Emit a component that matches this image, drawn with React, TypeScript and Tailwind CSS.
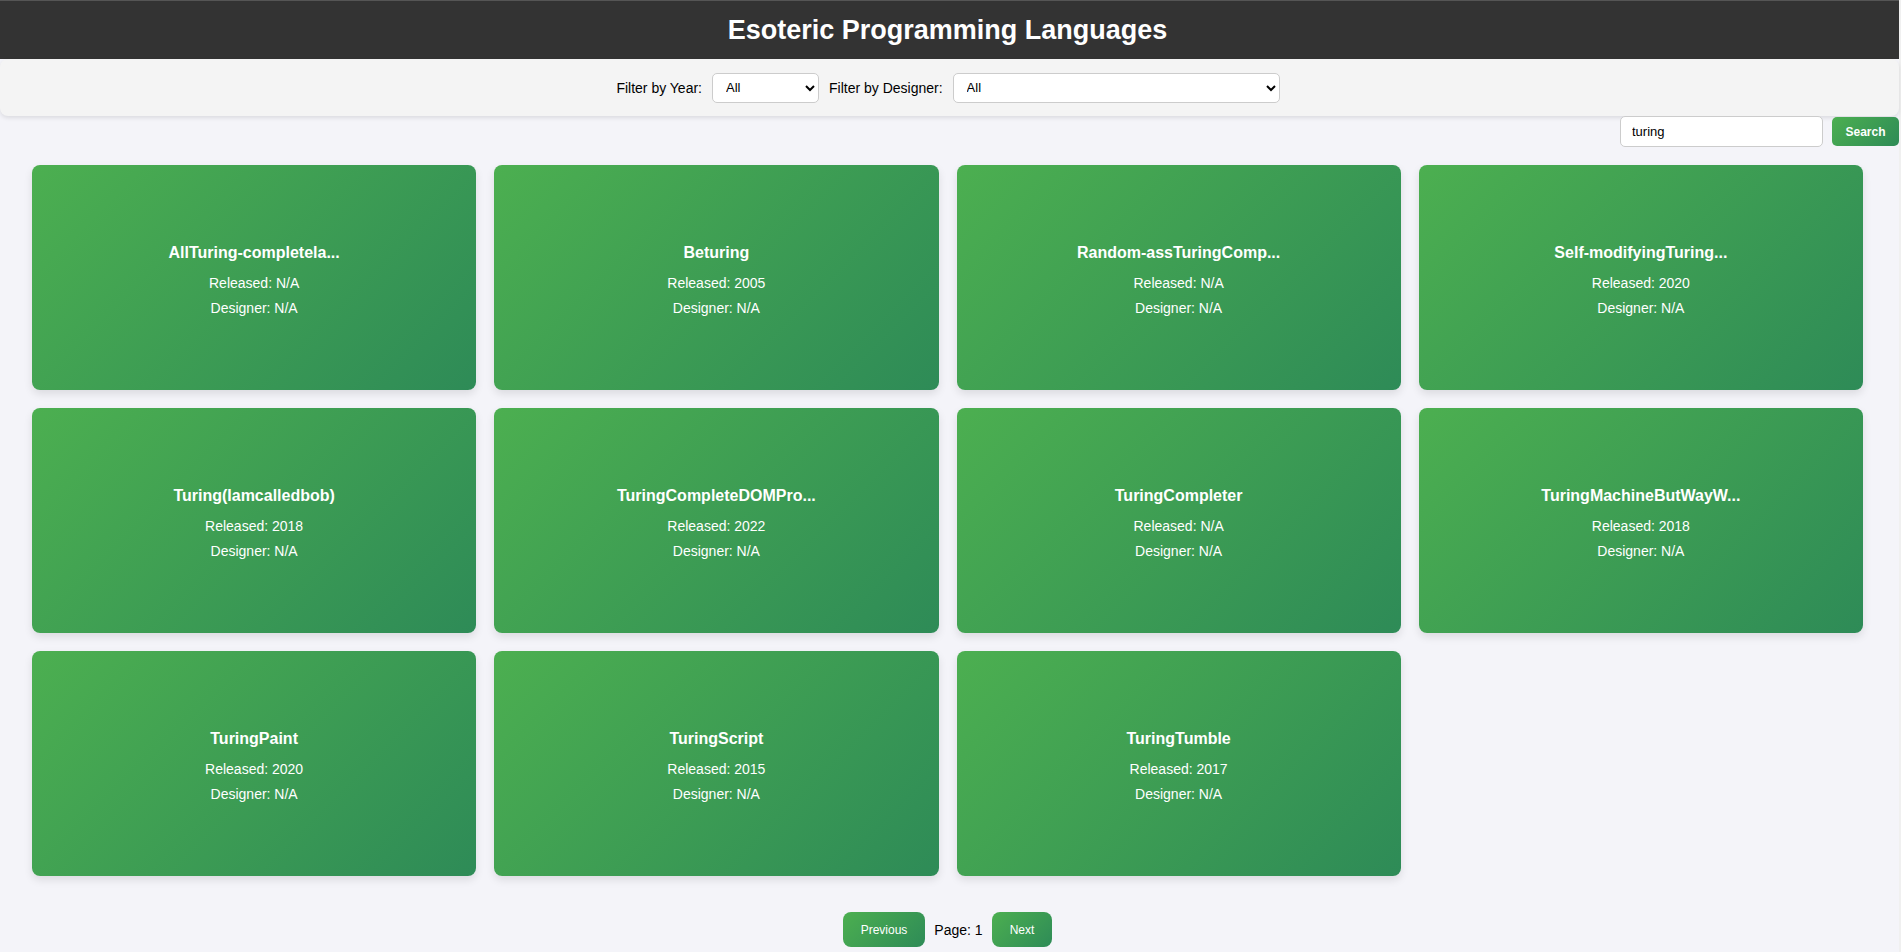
import { useState } from "react";

type Language = { name: string; released: string; designer: string };

const languages: Language[] = [
  { name: "AllTuring-completela...", released: "N/A", designer: "N/A" },
  { name: "Beturing", released: "2005", designer: "N/A" },
  { name: "Random-assTuringComp...", released: "N/A", designer: "N/A" },
  { name: "Self-modifyingTuring...", released: "2020", designer: "N/A" },
  { name: "Turing(Iamcalledbob)", released: "2018", designer: "N/A" },
  { name: "TuringCompleteDOMPro...", released: "2022", designer: "N/A" },
  { name: "TuringCompleter", released: "N/A", designer: "N/A" },
  { name: "TuringMachineButWayW...", released: "2018", designer: "N/A" },
  { name: "TuringPaint", released: "2020", designer: "N/A" },
  { name: "TuringScript", released: "2015", designer: "N/A" },
  { name: "TuringTumble", released: "2017", designer: "N/A" },
];

const green = "bg-[linear-gradient(135deg,#4caf50,#2e8b57)] text-white";
const field = "border border-[#ccc] rounded-[5px] bg-white text-[13px] text-black";

function LanguageCard({ name, released, designer }: Language) {
  return (
    <article
      className={`${green} flex h-[225px] flex-col items-center justify-center rounded-lg pt-2 text-center shadow-[0_4px_8px_rgba(0,0,0,0.1)]`}
    >
      <h2 className="mb-2 text-base leading-5 font-bold">{name}</h2>
      <p className="text-sm leading-[25px]">Released: {released}</p>
      <p className="text-sm leading-[25px]">Designer: {designer}</p>
    </article>
  );
}

export default function App() {
  const [query, setQuery] = useState("turing");

  return (
    <div className="min-h-screen border-r-2 border-[#f0f0f0] bg-[#f4f4f9] font-['Liberation_Sans',Arial,sans-serif] text-black">
      <header className="border-t border-[#555] bg-[#333] py-3 pr-1 text-center text-white">
        <h1 className="text-[27px] leading-[34px] font-bold">Esoteric Programming Languages</h1>
      </header>

      <div className="flex h-[57px] items-center justify-center gap-[9px] rounded-lg bg-[#f4f4f4] pr-1 text-sm shadow-[0_2px_4px_rgba(0,0,0,0.1)]">
        <label htmlFor="year" className="px-px">
          Filter by Year:
        </label>
        <select id="year" className={`${field} h-[30px] w-[107px] px-[9px]`}>
          <option>All</option>
        </select>
        <label htmlFor="designer" className="px-px">
          Filter by Designer:
        </label>
        <select id="designer" className={`${field} h-[30px] w-[327px] px-[9px]`}>
          <option>All</option>
        </select>
      </div>

      <form className="relative flex items-center justify-end gap-[9px]" onSubmit={(e) => e.preventDefault()}>
        <input
          type="text"
          aria-label="Search languages"
          value={query}
          onChange={(e) => setQuery(e.target.value)}
          className={`${field} h-[31px] w-[203px] px-[11px]`}
        />
        <button type="submit" className={`${green} h-[29px] w-[67px] rounded-[5px] text-xs font-bold`}>
          Search
        </button>
      </form>

      <main className="grid grid-cols-4 gap-[18px] pt-[18px] pr-9 pb-9 pl-8">
        {languages.map((language) => (
          <LanguageCard key={language.name} {...language} />
        ))}
      </main>

      <nav aria-label="Pagination" className="flex items-center justify-center gap-[9px] pr-1 pb-1 text-sm">
        <button type="button" className={`${green} h-[35px] rounded-lg px-[18px] text-xs`}>
          Previous
        </button>
        <span>Page: 1</span>
        <button type="button" className={`${green} h-[35px] rounded-lg px-[18px] text-xs`}>
          Next
        </button>
      </nav>
    </div>
  );
}
